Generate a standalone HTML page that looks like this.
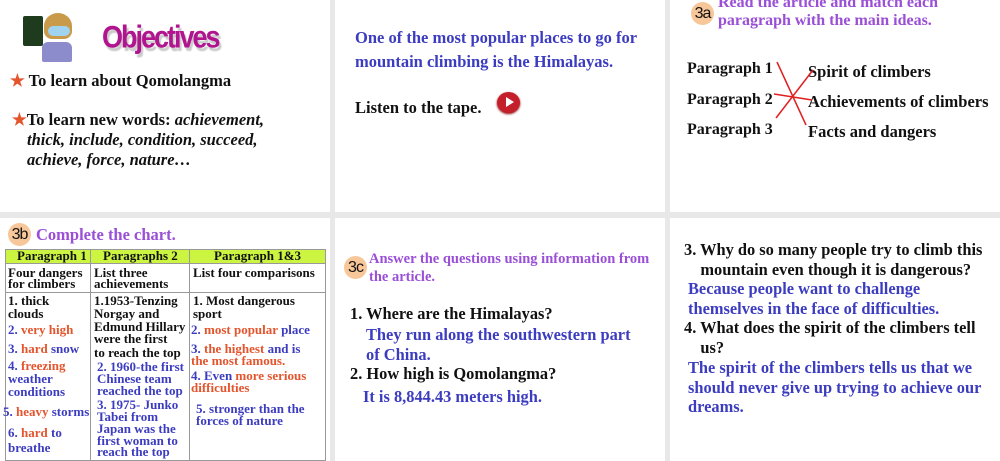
<!DOCTYPE html>
<html><head><meta charset="utf-8"><style>
*{margin:0;padding:0;box-sizing:border-box}
body{width:1000px;height:461px;background:#e8e8e8;position:relative;overflow:hidden;font-family:"Liberation Serif",serif;font-weight:bold;color:#111}
.p{position:absolute;background:#fff}
.a{position:absolute;white-space:nowrap}
.bl{color:#3c3cc0}.pu{color:#9a4fd6}.or{color:#e4552d}
.badge{position:absolute;width:23px;height:23px;border-radius:50%;background:#f7c79a;font-family:"Liberation Sans",sans-serif;font-weight:normal;font-size:16px;text-align:center;line-height:23px;color:#111;letter-spacing:-1px}
.t{position:absolute;white-space:nowrap;font-size:13px;line-height:14px}
.gl{position:absolute;background:#999}
</style></head><body>
<div class="p" style="left:0;top:0;width:330px;height:212px"></div>
<div class="p" style="left:335px;top:0;width:330px;height:212px"></div>
<div class="p" style="left:670px;top:0;width:330px;height:212px"></div>
<div class="p" style="left:0;top:218px;width:330px;height:243px"></div>
<div class="p" style="left:335px;top:218px;width:330px;height:243px"></div>
<div class="p" style="left:670px;top:218px;width:330px;height:243px"></div>

<!-- panel 1 -->
<div class="a" style="left:23px;top:16px;width:20px;height:30px;background:#1e3b1e;border-radius:2px"></div>
<div class="a" style="left:44px;top:13px;width:28px;height:26px;background:#c89a4a;border-radius:50% 50% 30% 30%"></div>
<div class="a" style="left:48px;top:26px;width:22px;height:10px;background:#9fd3ef;border-radius:5px"></div>
<div class="a" style="left:42px;top:42px;width:30px;height:20px;background:#8c8ccc;border-radius:6px 6px 2px 2px"></div>
<div class="a" style="left:102px;top:20px;font-family:'Liberation Sans',sans-serif;font-size:27px;color:#b0158f;letter-spacing:-2px;text-shadow:2px 3px 1px #ccc;transform:scaleY(1.15);transform-origin:top left">Objectives</div>
<div class="a" style="left:10px;top:71px;font-size:16.5px;line-height:20px"><span class="or">★</span> To learn about Qomolangma</div>
<div class="a" style="left:12px;top:110px;font-size:16.5px;line-height:20px"><span class="or">★</span>To learn new words: <i>achievement,</i></div>
<div class="a" style="left:27px;top:130px;font-size:16.5px;line-height:20px"><i>thick, include, condition, succeed,</i></div>
<div class="a" style="left:27px;top:150px;font-size:16.5px;line-height:20px"><i>achieve, force, nature…</i></div>

<!-- panel 2 -->
<div class="a bl" style="left:355px;top:26px;font-size:16.5px;line-height:24px">One of the most popular places to go for<br>mountain climbing is the Himalayas.</div>
<div class="a" style="left:355px;top:98px;font-size:16.5px;line-height:20px">Listen to the tape.</div>
<div class="a" style="left:497px;top:92px;width:23px;height:21px;border-radius:50%;background:#c4202c;box-shadow:0 1px 2px #800"></div>
<div class="a" style="left:506px;top:97px;width:0;height:0;border-left:8px solid #fff;border-top:5.5px solid transparent;border-bottom:5.5px solid transparent"></div>

<!-- panel 3 -->
<div class="badge" style="left:691px;top:2px">3a</div>
<div class="a pu" style="left:718px;top:-6px;font-size:16px;line-height:18px">Read the article and match each<br>paragraph with the main ideas.</div>
<div class="a" style="left:687px;top:54px;font-size:16px;line-height:30.5px">Paragraph 1<br>Paragraph 2<br>Paragraph 3</div>
<div class="a" style="left:808px;top:57px;font-size:16.5px;line-height:30px">Spirit of climbers<br>Achievements of climbers<br>Facts and dangers</div>
<svg class="a" style="left:0;top:0" width="1000" height="140"><g stroke="#e02020" stroke-width="1.5" fill="none"><line x1="777" y1="62" x2="806" y2="125"/><line x1="776" y1="118" x2="813" y2="70"/><line x1="774" y1="94" x2="812" y2="100"/></g></svg>

<!-- panel 4 -->
<div class="badge" style="left:8px;top:223px">3b</div>
<div class="a pu" style="left:36px;top:225px;font-size:16.5px;line-height:20px">Complete the chart.</div>
<div class="a" style="left:5px;top:250px;width:321px;height:13px;background:#ccf542"></div>
<div class="gl" style="left:5px;top:249px;width:321px;height:1px"></div>
<div class="gl" style="left:5px;top:263px;width:321px;height:1px"></div>
<div class="gl" style="left:5px;top:292px;width:321px;height:1px"></div>
<div class="gl" style="left:5px;top:460px;width:321px;height:1px"></div>
<div class="gl" style="left:5px;top:249px;width:1px;height:212px"></div>
<div class="gl" style="left:90px;top:249px;width:1px;height:212px"></div>
<div class="gl" style="left:189px;top:249px;width:1px;height:212px"></div>
<div class="gl" style="left:325px;top:249px;width:1px;height:212px"></div>
<div class="t" style="left:17px;top:249px">Paragraph 1</div>
<div class="t" style="left:103px;top:249px">Paragraphs 2</div>
<div class="t" style="left:214px;top:249px">Paragraph 1&amp;3</div>
<div class="t" style="left:8px;top:266px">Four dangers</div>
<div class="t" style="left:8px;top:277px">for climbers</div>
<div class="t" style="left:94px;top:266px">List three</div>
<div class="t" style="left:94px;top:277px">achievements</div>
<div class="t" style="left:193px;top:266px">List four comparisons</div>
<div class="t" style="left:8px;top:294px">1. thick</div>
<div class="t" style="left:8px;top:307px">clouds</div>
<div class="t bl" style="left:8px;top:323px">2. <span class="or">very high</span></div>
<div class="t bl" style="left:8px;top:342px">3. <span class="or">hard</span> snow</div>
<div class="t bl" style="left:8px;top:359px">4. <span class="or">freezing</span></div>
<div class="t bl" style="left:8px;top:372px">weather</div>
<div class="t bl" style="left:8px;top:385px">conditions</div>
<div class="t bl" style="left:3px;top:405px">5. <span class="or">heavy</span> storms</div>
<div class="t bl" style="left:8px;top:426px">6. <span class="or">hard</span> to</div>
<div class="t bl" style="left:8px;top:441px">breathe</div>
<div class="t" style="left:94px;top:294px">1.1953-Tenzing</div>
<div class="t" style="left:94px;top:307px">Norgay and</div>
<div class="t" style="left:94px;top:320px">Edmund Hillary</div>
<div class="t" style="left:94px;top:332px">were the first</div>
<div class="t" style="left:94px;top:346px">to reach the top</div>
<div class="t bl" style="left:97px;top:360px">2. 1960-the first</div>
<div class="t bl" style="left:97px;top:372px">Chinese team</div>
<div class="t bl" style="left:97px;top:384px">reached the top</div>
<div class="t bl" style="left:97px;top:398px">3. 1975- Junko</div>
<div class="t bl" style="left:97px;top:410px">Tabei from</div>
<div class="t bl" style="left:97px;top:422px">Japan was the</div>
<div class="t bl" style="left:97px;top:434px">first woman to</div>
<div class="t bl" style="left:97px;top:445px">reach the top</div>
<div class="t" style="left:193px;top:294px">1. Most dangerous</div>
<div class="t" style="left:193px;top:307px">sport</div>
<div class="t bl" style="left:191px;top:323px">2. <span class="or">most popular</span> place</div>
<div class="t bl" style="left:191px;top:342px">3. <span class="or">the highest</span> and is</div>
<div class="t or" style="left:191px;top:354px">the most famous.</div>
<div class="t bl" style="left:191px;top:369px">4. Even <span class="or">more serious</span></div>
<div class="t or" style="left:191px;top:381px">difficulties</div>
<div class="t bl" style="left:196px;top:402px">5. stronger than the</div>
<div class="t bl" style="left:196px;top:414px">forces of nature</div>

<!-- panel 5 -->
<div class="badge" style="left:344px;top:256px">3c</div>
<div class="a pu" style="left:369px;top:250px;font-size:14.5px;line-height:18px">Answer the questions using information from<br>the article.</div>
<div class="a" style="left:350px;top:304px;font-size:16.4px;line-height:20px">1. Where are the Himalayas?</div>
<div class="a bl" style="left:366px;top:325px;font-size:16.4px;line-height:20px">They run along the southwestern part<br>of China.</div>
<div class="a" style="left:350px;top:364px;font-size:16.4px;line-height:20px">2. How high is Qomolangma?</div>
<div class="a bl" style="left:363px;top:387px;font-size:16.4px;line-height:20px">It is 8,844.43 meters high.</div>

<!-- panel 6 -->
<div class="a" style="left:684px;top:240px;font-size:16.4px;line-height:19.5px">3. Why do so many people try to climb this<br>&nbsp;&nbsp;&nbsp;&nbsp;mountain even though it is dangerous?</div>
<div class="a bl" style="left:688px;top:279px;font-size:16.4px;line-height:19.5px">Because people want to challenge<br>themselves in the face of difficulties.</div>
<div class="a" style="left:684px;top:318px;font-size:16.4px;line-height:19.5px">4. What does the spirit of the climbers tell<br>&nbsp;&nbsp;&nbsp;&nbsp;us?</div>
<div class="a bl" style="left:688px;top:358px;font-size:16.4px;line-height:19.5px">The spirit of the climbers tells us that we<br>should never give up trying to achieve our<br>dreams.</div>
</body></html>
